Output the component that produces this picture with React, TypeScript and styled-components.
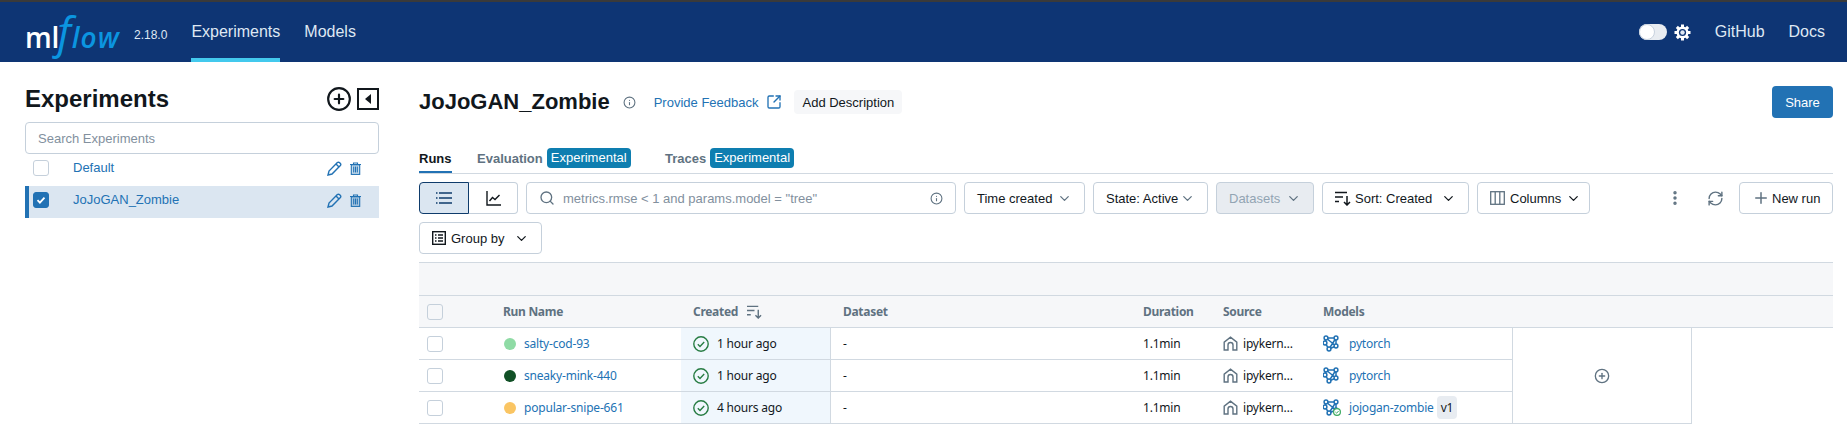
import { ReactNode } from "react";
import styled, { createGlobalStyle } from "styled-components";
import {
  ChevronDown,
  CirclePlus,
  EllipsisVertical,
  Info,
  Plus,
  RefreshCw,
  Search,
  SquareArrowOutUpRight,
} from "lucide-react";

const GlobalStyle = createGlobalStyle`
  html, body {
    margin: 0;
    padding: 0;
    background: #fff;
  }
  body {
    font-family: "Liberation Sans", Arial, sans-serif;
    font-size: 13px;
    color: #11171c;
  }
`;

const Page = styled.div`
  width: 1847px;
  height: 443px;
  overflow: hidden;
  border-top: 2px solid #3a3a3a;
  box-sizing: border-box;
`;

const Header = styled.header`
  display: flex;
  align-items: stretch;
  height: 60px;
  background: #0e3574;
  color: #dfe8f3;
  padding: 0 22px 0 25px;
`;

const Logo = styled.div`
  display: flex;
  align-items: baseline;
  width: 109px;
  height: 60px;
  line-height: 70px;
  white-space: nowrap;
  font-family: "Open Sans", sans-serif;
`;

const LogoMl = styled.span`
  font-weight: 600;
  font-size: 28px;
  letter-spacing: -0.2px;
  color: #fff;
`;

const LogoF = styled.span`
  font-style: italic;
  font-weight: 500;
  font-size: 44px;
  line-height: 0;
  margin-left: -2px;
  color: #0b95e0;
`;

const LogoFlow = styled.span`
  font-style: italic;
  font-weight: 600;
  font-size: 28px;
  letter-spacing: 1px;
  line-height: 0;
  margin-left: 1px;
  color: #0b95e0;
`;

const Version = styled.span`
  align-self: center;
  font-size: 12px;
  margin: 6px 24px 0 0;
  color: #dfe8f3;
`;

const NavLink = styled.a<{ $active?: boolean }>`
  display: flex;
  align-items: center;
  font-size: 16px;
  margin-right: 24px;
  box-sizing: border-box;
  padding-top: 4px;
  border-bottom: 4px solid ${(p) => (p.$active ? "#43c9ed" : "transparent")};
`;

const HeaderRight = styled.div`
  display: flex;
  align-items: center;
  margin-left: auto;
`;

const Toggle = styled.span`
  display: block;
  position: relative;
  width: 28px;
  height: 16px;
  border-radius: 8px;
  background: #e8ecf1;
  margin-right: 7px;
  &::after {
    content: "";
    position: absolute;
    left: 0;
    top: 0;
    width: 16px;
    height: 16px;
    border-radius: 50%;
    background: #fff;
    border: 1px solid #c8d2de;
    box-sizing: border-box;
  }
`;

const HeaderLink = styled.a`
  font-size: 16px;
  margin-left: 24px;
`;

const Content = styled.div`
  display: flex;
`;

const Sidebar = styled.aside`
  width: 354px;
  margin: 0 40px 0 25px;
  padding-top: 21px;
`;

const SidebarHead = styled.div`
  display: flex;
  align-items: center;
  justify-content: space-between;
  height: 32px;
  margin-bottom: 7px;
`;

const SidebarTitle = styled.h2`
  margin: 0;
  font-size: 24px;
  font-weight: 700;
`;

const SidebarIcons = styled.div`
  display: flex;
  align-items: center;
  gap: 5px;
  color: #11171c;
`;

const SearchInput = styled.div`
  display: flex;
  align-items: center;
  height: 32px;
  box-sizing: border-box;
  border: 1px solid #c5d0db;
  border-radius: 4px;
  padding: 0 12px;
  color: #82909e;
`;

const ExperimentRow = styled.div<{ $active?: boolean }>`
  display: flex;
  align-items: center;
  height: 32px;
  box-sizing: border-box;
  padding: 0 0 4px ${(p) => (p.$active ? "4px" : "8px")};
  background: ${(p) => (p.$active ? "#dbe6f1" : "transparent")};
  border-left: ${(p) => (p.$active ? "4px solid #2272b4" : "none")};
`;

const ExperimentName = styled.span`
  flex: 1;
  margin-left: 24px;
  margin-top: -1px;
  color: #2272b4;
`;

const RowIcons = styled.span`
  display: flex;
  align-items: center;
  gap: 8px;
  width: 52px;
  color: #2272b4;
`;

const Check = styled.span<{ $on?: boolean; $grey?: boolean }>`
  display: flex;
  align-items: center;
  justify-content: center;
  flex: none;
  width: 16px;
  height: 16px;
  box-sizing: border-box;
  border-radius: 3px;
  border: 1px solid ${(p) => (p.$on ? "#2272b4" : "#c5d0db")};
  background: ${(p) => (p.$on ? "#2272b4" : p.$grey ? "#f6f7f9" : "#fff")};
  color: #fff;
`;

const Main = styled.main`
  width: 1414px;
  padding-top: 24px;
`;

const TitleRow = styled.div`
  display: flex;
  align-items: center;
  height: 32px;
  margin-bottom: 30px;
`;

const Title = styled.h1`
  margin: 0 13px 0 0;
  font-size: 22px;
  font-weight: 700;
`;

const FeedbackLink = styled.a`
  display: flex;
  align-items: center;
  gap: 8px;
  margin-left: 18px;
  color: #2272b4;
`;

const GhostButton = styled.button`
  height: 24px;
  margin-left: 12px;
  padding: 0 8px;
  border: 0;
  border-radius: 4px;
  background: #f6f7f9;
  font: inherit;
  color: #11171c;
`;

const ShareButton = styled.button`
  height: 32px;
  width: 61px;
  margin-left: auto;
  border: 0;
  border-radius: 4px;
  background: #2272b4;
  color: #fff;
  font: inherit;
`;

const Tabs = styled.div`
  display: flex;
  align-items: stretch;
  height: 25px;
  border-bottom: 1px solid #d1d9e1;
  margin-bottom: 8px;
`;

const Tab = styled.div<{ $active?: boolean; $w: number }>`
  display: flex;
  align-items: flex-start;
  gap: 4px;
  width: ${(p) => p.$w}px;
  margin-right: 26px;
  box-sizing: border-box;
  font-weight: 700;
  height: 25px;
  color: ${(p) => (p.$active ? "#11171c" : "#5f7281")};
`;

const TabLabel = styled.span<{ $active?: boolean }>`
  display: block;
  height: 25px;
  line-height: 21px;
  box-sizing: border-box;
  border-bottom: ${(p) => (p.$active ? "2px solid #2272b4" : "0")};
`;

const Badge = styled.span`
  height: 20px;
  line-height: 20px;
  padding: 0 4px;
  border-radius: 4px;
  background: #0e7eb0;
  color: #fff;
  font-weight: 400;
`;

const Toolbar = styled.div`
  display: flex;
  align-items: center;
  gap: 8px;
  margin-bottom: 8px;
`;

const Segments = styled.div`
  display: flex;
`;

const Segment = styled.span<{ $on?: boolean }>`
  display: flex;
  align-items: center;
  justify-content: center;
  width: ${(p) => (p.$on ? "50px" : "49px")};
  height: 32px;
  box-sizing: border-box;
  border: 1px solid ${(p) => (p.$on ? "#0e3b6b" : "#c5d0db")};
  border-left-width: ${(p) => (p.$on ? "1px" : "0")};
  border-radius: ${(p) => (p.$on ? "4px 0 0 4px" : "0 4px 4px 0")};
  background: ${(p) => (p.$on ? "#dbe6f1" : "#fff")};
  color: ${(p) => (p.$on ? "#0e3b6b" : "#11171c")};
`;

const FilterSearch = styled.div`
  display: flex;
  align-items: center;
  gap: 8px;
  width: 430px;
  height: 32px;
  box-sizing: border-box;
  border: 1px solid #c5d0db;
  border-radius: 4px;
  padding: 0 12px;
  color: #82909e;
`;

const FilterText = styled.span`
  flex: 1;
`;

const ToolButton = styled.div<{ $w: number; $disabled?: boolean }>`
  display: flex;
  align-items: center;
  justify-content: space-between;
  width: ${(p) => p.$w}px;
  height: 32px;
  box-sizing: border-box;
  border: 1px solid #c5d0db;
  border-radius: 4px;
  padding: 0 12px;
  white-space: nowrap;
  background: ${(p) => (p.$disabled ? "#e8ecf1" : "#fff")};
  color: ${(p) => (p.$disabled ? "#92a4b3" : "#11171c")};
`;

const ButtonLabel = styled.span<{ $gap?: number }>`
  display: flex;
  align-items: center;
  gap: ${(p) => p.$gap ?? 5}px;
`;

const ToolEnd = styled.div`
  display: flex;
  align-items: center;
  margin-left: auto;
  color: #5f7281;
`;

const PlainIcon = styled.span<{ $w: number }>`
  display: flex;
  align-items: center;
  justify-content: center;
  width: ${(p) => p.$w}px;
`;

const TableWrap = styled.div`
  font-family: "Noto Sans", sans-serif;
  font-size: 12px;
  letter-spacing: -0.2px;
`;

const TopBand = styled.div`
  height: 34px;
  box-sizing: border-box;
  background: #f6f7f9;
  border-top: 1px solid #d1d9e1;
  border-bottom: 1px solid #d1d9e1;
`;

const columns = "74px 188px 150px 300px 80px 100px 201px";

const HeadRow = styled.div`
  display: grid;
  grid-template-columns: ${columns} 1fr;
  align-items: center;
  height: 32px;
  box-sizing: border-box;
  background: #f6f7f9;
  border-bottom: 1px solid #d1d9e1;
  color: #5f7281;
  font-weight: 700;
  letter-spacing: -0.3px;
`;

const HeadCell = styled.div<{ $pad?: number }>`
  display: flex;
  align-items: center;
  gap: 9px;
  padding-left: ${(p) => p.$pad ?? 12}px;
`;

const Body = styled.div`
  display: flex;
  width: 1273px;
`;

const Rows = styled.div`
  width: 1093px;
`;

const Row = styled.div`
  display: grid;
  grid-template-columns: ${columns};
  align-items: stretch;
  height: 32px;
  box-sizing: border-box;
  border-bottom: 1px solid #d1d9e1;
`;

const Cell = styled.div<{ $pad?: number }>`
  display: flex;
  align-items: center;
  gap: 8px;
  min-width: 0;
  padding-left: ${(p) => p.$pad ?? 12}px;
`;

const CreatedCell = styled(Cell)`
  background: #f0f7fd;
  border-right: 1px solid #d1d9e1;
`;

const Dot = styled.span<{ $color: string }>`
  width: 12px;
  height: 12px;
  border-radius: 50%;
  background: ${(p) => p.$color};
`;

const RunLink = styled.a`
  color: #2272b4;
`;

const SourceText = styled.span`
  white-space: nowrap;
  margin-left: -3px;
`;

const VersionTag = styled.span`
  padding: 3px 4px;
  margin-left: -5px;
  border-radius: 4px;
  background: #e8ecf1;
`;

const AddCell = styled.div`
  display: flex;
  align-items: center;
  justify-content: center;
  width: 180px;
  box-sizing: border-box;
  border: 1px solid #d1d9e1;
  border-top: 0;
  color: #5f7281;
`;

function GearIcon() {
  const teeth = [0, 45, 90, 135];
  return (
    <svg width="17" height="17" viewBox="0 0 17 17">
      {teeth.map((deg) => (
        <rect key={deg} x="7" y="0.5" width="3" height="16" fill="#fff" transform={`rotate(${deg} 8.5 8.5)`} />
      ))}
      <circle cx="8.5" cy="8.5" r="6" fill="#fff" />
      <circle cx="8.5" cy="8.5" r="3.6" fill="#0e3574" />
      <circle cx="8.5" cy="8.5" r="2.2" fill="#dfe8f3" />
    </svg>
  );
}

function CollapseIcon() {
  return (
    <svg width="22" height="22" viewBox="0 0 22 22">
      <rect x="1" y="1" width="20" height="20" fill="none" stroke="#11171c" strokeWidth="2" />
      <path d="M14 6v10l-6-5z" fill="#11171c" />
    </svg>
  );
}

function TickIcon() {
  return (
    <svg width="10" height="10" viewBox="0 0 10 10">
      <path d="M1.5 5.2l2.4 2.4 4.6-5" fill="none" stroke="#fff" strokeWidth="1.8" />
    </svg>
  );
}

function PencilIcon() {
  return (
    <svg width="15" height="15" viewBox="0 0 15 15" fill="none" stroke="currentColor" strokeWidth="1.4">
      <path d="M1 14l1-4 8.4-8.4a1.4 1.4 0 0 1 2 0l1 1a1.4 1.4 0 0 1 0 2L5 13z" />
      <path d="M9 3l3 3" />
    </svg>
  );
}

function TrashIcon() {
  return (
    <svg width="11" height="13" viewBox="0 0 11 13" fill="none" stroke="currentColor" strokeWidth="1.1">
      <path d="M0 2.5h11M3.5 2.5V1h4v1.5" />
      <rect x="1.3" y="2.8" width="8.4" height="9.6" fill="currentColor" fillOpacity="0.25" />
      <path d="M3.7 4.5v6M5.5 4.5v6M7.3 4.5v6" />
    </svg>
  );
}

function ListIcon() {
  return (
    <svg width="16" height="12" viewBox="0 0 16 12" fill="none" stroke="currentColor" strokeWidth="1.5">
      <path d="M3 1h13M3 6h13M3 11h13M0 1h1.5M0 6h1.5M0 11h1.5" />
    </svg>
  );
}

function ChartIcon() {
  return (
    <svg width="15" height="15" viewBox="0 0 15 15" fill="none" stroke="currentColor" strokeWidth="1.4">
      <path d="M1 0v14h14M3.5 10l3-3.5 2.5 2 4.5-4.5" />
    </svg>
  );
}

function SortIcon({ size = 16 }: { size?: number }) {
  return (
    <svg width={size} height={size} viewBox="0 0 16 16" fill="none" stroke="currentColor" strokeWidth="1.5">
      <path d="M0 2.5h12M0 7h8M0 11.5h4M12 6v9M9 12l3 3 3-3" />
    </svg>
  );
}

function TableIcon() {
  return (
    <svg width="14" height="14" viewBox="0 0 14 14" fill="none" stroke="currentColor" strokeWidth="1.4">
      <rect x="0.7" y="0.7" width="12.6" height="12.6" />
      <path d="M3 4h1.5M6 4h5M3 7h1.5M6 7h5M3 10h1.5M6 10h5" />
    </svg>
  );
}

function ColumnsIcon() {
  return (
    <svg width="15" height="14" viewBox="0 0 15 14" fill="none" stroke="#5f7281" strokeWidth="1.3">
      <rect x="0.7" y="0.7" width="13.6" height="12.6" />
      <path d="M5.2 1v12M9.8 1v12" />
    </svg>
  );
}

function StatusIcon() {
  return (
    <svg width="16" height="16" viewBox="0 0 16 16" fill="none" stroke="#277c43" strokeWidth="1.4">
      <circle cx="8" cy="8" r="7.2" />
      <path d="M4.8 8.2l2.2 2.2 4.2-4.4" />
    </svg>
  );
}

function NotebookIcon() {
  return (
    <svg width="15" height="15" viewBox="0 0 15 15" fill="none" stroke="#5f7281" strokeWidth="1.4">
      <path d="M1.2 14V6.2L7.5 1.2l6.3 5V14H10V9a2.5 2.5 0 0 0-5 0v5z" />
    </svg>
  );
}

function ModelIcon({ registered }: { registered?: boolean }) {
  return (
    <svg width="18" height="17" viewBox="0 0 18 17" fill="none" stroke="#2272b4" strokeWidth="1.5">
      <path d="M3 3h10M3 3l10 8M13 3L6 14M13 3v8M13 11l-7 3M3 3l-1 5 4 6" />
      {[
        [3, 3],
        [13, 3],
        [2, 8],
        [13, 11],
        [6, 14],
      ].map(([cx, cy]) => (
        <circle key={cx * 100 + cy} cx={cx} cy={cy} r="1.9" fill="#fff" />
      ))}
      {registered && (
        <g>
          <circle cx="14" cy="13" r="3.4" fill="#fff" stroke="#3caa60" strokeWidth="1.2" />
          <path d="M12.4 13l1.2 1.2 2-2.2" stroke="#3caa60" strokeWidth="1" />
        </g>
      )}
    </svg>
  );
}

type Run = {
  name: string;
  color: string;
  created: string;
  model: ReactNode;
};

const runs: Run[] = [
  {
    name: "salty-cod-93",
    color: "#8fdba5",
    created: "1 hour ago",
    model: (
      <>
        <ModelIcon />
        <RunLink>pytorch</RunLink>
      </>
    ),
  },
  {
    name: "sneaky-mink-440",
    color: "#115026",
    created: "1 hour ago",
    model: (
      <>
        <ModelIcon />
        <RunLink>pytorch</RunLink>
      </>
    ),
  },
  {
    name: "popular-snipe-661",
    color: "#fac563",
    created: "4 hours ago",
    model: (
      <>
        <ModelIcon registered />
        <RunLink>jojogan-zombie</RunLink>
        <VersionTag>v1</VersionTag>
      </>
    ),
  },
];

export default function App() {
  return (
    <Page>
      <GlobalStyle />
      <Header>
        <Logo>
          <LogoMl>ml</LogoMl>
          <LogoF>f</LogoF>
          <LogoFlow>low</LogoFlow>
        </Logo>
        <Version>2.18.0</Version>
        <NavLink $active>Experiments</NavLink>
        <NavLink>Models</NavLink>
        <HeaderRight>
          <Toggle />
          <GearIcon />
          <HeaderLink>GitHub</HeaderLink>
          <HeaderLink>Docs</HeaderLink>
        </HeaderRight>
      </Header>
      <Content>
        <Sidebar>
          <SidebarHead>
            <SidebarTitle>Experiments</SidebarTitle>
            <SidebarIcons>
              <CirclePlus size={26} strokeWidth={2} />
              <CollapseIcon />
            </SidebarIcons>
          </SidebarHead>
          <SearchInput>Search Experiments</SearchInput>
          <ExperimentRow>
            <Check />
            <ExperimentName>Default</ExperimentName>
            <RowIcons>
              <PencilIcon />
              <TrashIcon />
            </RowIcons>
          </ExperimentRow>
          <ExperimentRow $active>
            <Check $on>
              <TickIcon />
            </Check>
            <ExperimentName>JoJoGAN_Zombie</ExperimentName>
            <RowIcons>
              <PencilIcon />
              <TrashIcon />
            </RowIcons>
          </ExperimentRow>
        </Sidebar>
        <Main>
          <TitleRow>
            <Title>JoJoGAN_Zombie</Title>
            <Info size={13} color="#5f7281" />
            <FeedbackLink>
              Provide Feedback
              <SquareArrowOutUpRight size={16} />
            </FeedbackLink>
            <GhostButton>Add Description</GhostButton>
            <ShareButton>Share</ShareButton>
          </TitleRow>
          <Tabs>
            <Tab $active $w={32}>
              <TabLabel $active>Runs</TabLabel>
            </Tab>
            <Tab $w={162}>
              <TabLabel>Evaluation</TabLabel>
              <Badge>Experimental</Badge>
            </Tab>
            <Tab $w={130}>
              <TabLabel>Traces</TabLabel>
              <Badge>Experimental</Badge>
            </Tab>
          </Tabs>
          <Toolbar>
            <Segments>
              <Segment $on>
                <ListIcon />
              </Segment>
              <Segment>
                <ChartIcon />
              </Segment>
            </Segments>
            <FilterSearch>
              <Search size={16} color="#5f7281" />
              <FilterText>metrics.rmse &lt; 1 and params.model = "tree"</FilterText>
              <Info size={13} color="#5f7281" />
            </FilterSearch>
            <ToolButton $w={121}>
              Time created
              <ChevronDown size={15} color="#5f7281" />
            </ToolButton>
            <ToolButton $w={115}>
              State: Active
              <ChevronDown size={15} color="#5f7281" />
            </ToolButton>
            <ToolButton $w={98} $disabled>
              Datasets
              <ChevronDown size={15} color="#5f7281" />
            </ToolButton>
            <ToolButton $w={147}>
              <ButtonLabel $gap={4}>
                <SortIcon />
                Sort: Created
              </ButtonLabel>
              <ChevronDown size={15} />
            </ToolButton>
            <ToolButton $w={113}>
              <ButtonLabel>
                <ColumnsIcon />
                Columns
                <ChevronDown size={15} />
              </ButtonLabel>
            </ToolButton>
            <ToolEnd>
              <PlainIcon $w={32}>
                <EllipsisVertical size={18} strokeWidth={2.6} />
              </PlainIcon>
              <PlainIcon $w={48}>
                <RefreshCw size={17} />
              </PlainIcon>
              <ToolButton $w={94}>
                <ButtonLabel $gap={2}>
                  <Plus size={18} color="#5f7281" />
                  New run
                </ButtonLabel>
              </ToolButton>
            </ToolEnd>
          </Toolbar>
          <Toolbar>
            <ToolButton $w={123}>
              <ButtonLabel>
                <TableIcon />
                Group by
              </ButtonLabel>
              <ChevronDown size={15} />
            </ToolButton>
          </Toolbar>
          <TableWrap>
            <TopBand />
            <HeadRow>
              <HeadCell $pad={8}>
                <Check $grey />
              </HeadCell>
              <HeadCell $pad={10}>Run Name</HeadCell>
              <HeadCell>
                Created
                <SortIcon size={15} />
              </HeadCell>
              <HeadCell>Dataset</HeadCell>
              <HeadCell>Duration</HeadCell>
              <HeadCell>Source</HeadCell>
              <HeadCell>Models</HeadCell>
              <HeadCell />
            </HeadRow>
            <Body>
              <Rows>
                {runs.map((run) => (
                  <Row key={run.name}>
                    <Cell $pad={8}>
                      <Check />
                    </Cell>
                    <Cell $pad={11}>
                      <Dot $color={run.color} />
                      <RunLink>{run.name}</RunLink>
                    </Cell>
                    <CreatedCell>
                      <StatusIcon />
                      {run.created}
                    </CreatedCell>
                    <Cell>-</Cell>
                    <Cell>1.1min</Cell>
                    <Cell>
                      <NotebookIcon />
                      <SourceText>ipykern…</SourceText>
                    </Cell>
                    <Cell>{run.model}</Cell>
                  </Row>
                ))}
              </Rows>
              <AddCell>
                <CirclePlus size={16} />
              </AddCell>
            </Body>
          </TableWrap>
        </Main>
      </Content>
    </Page>
  );
}
